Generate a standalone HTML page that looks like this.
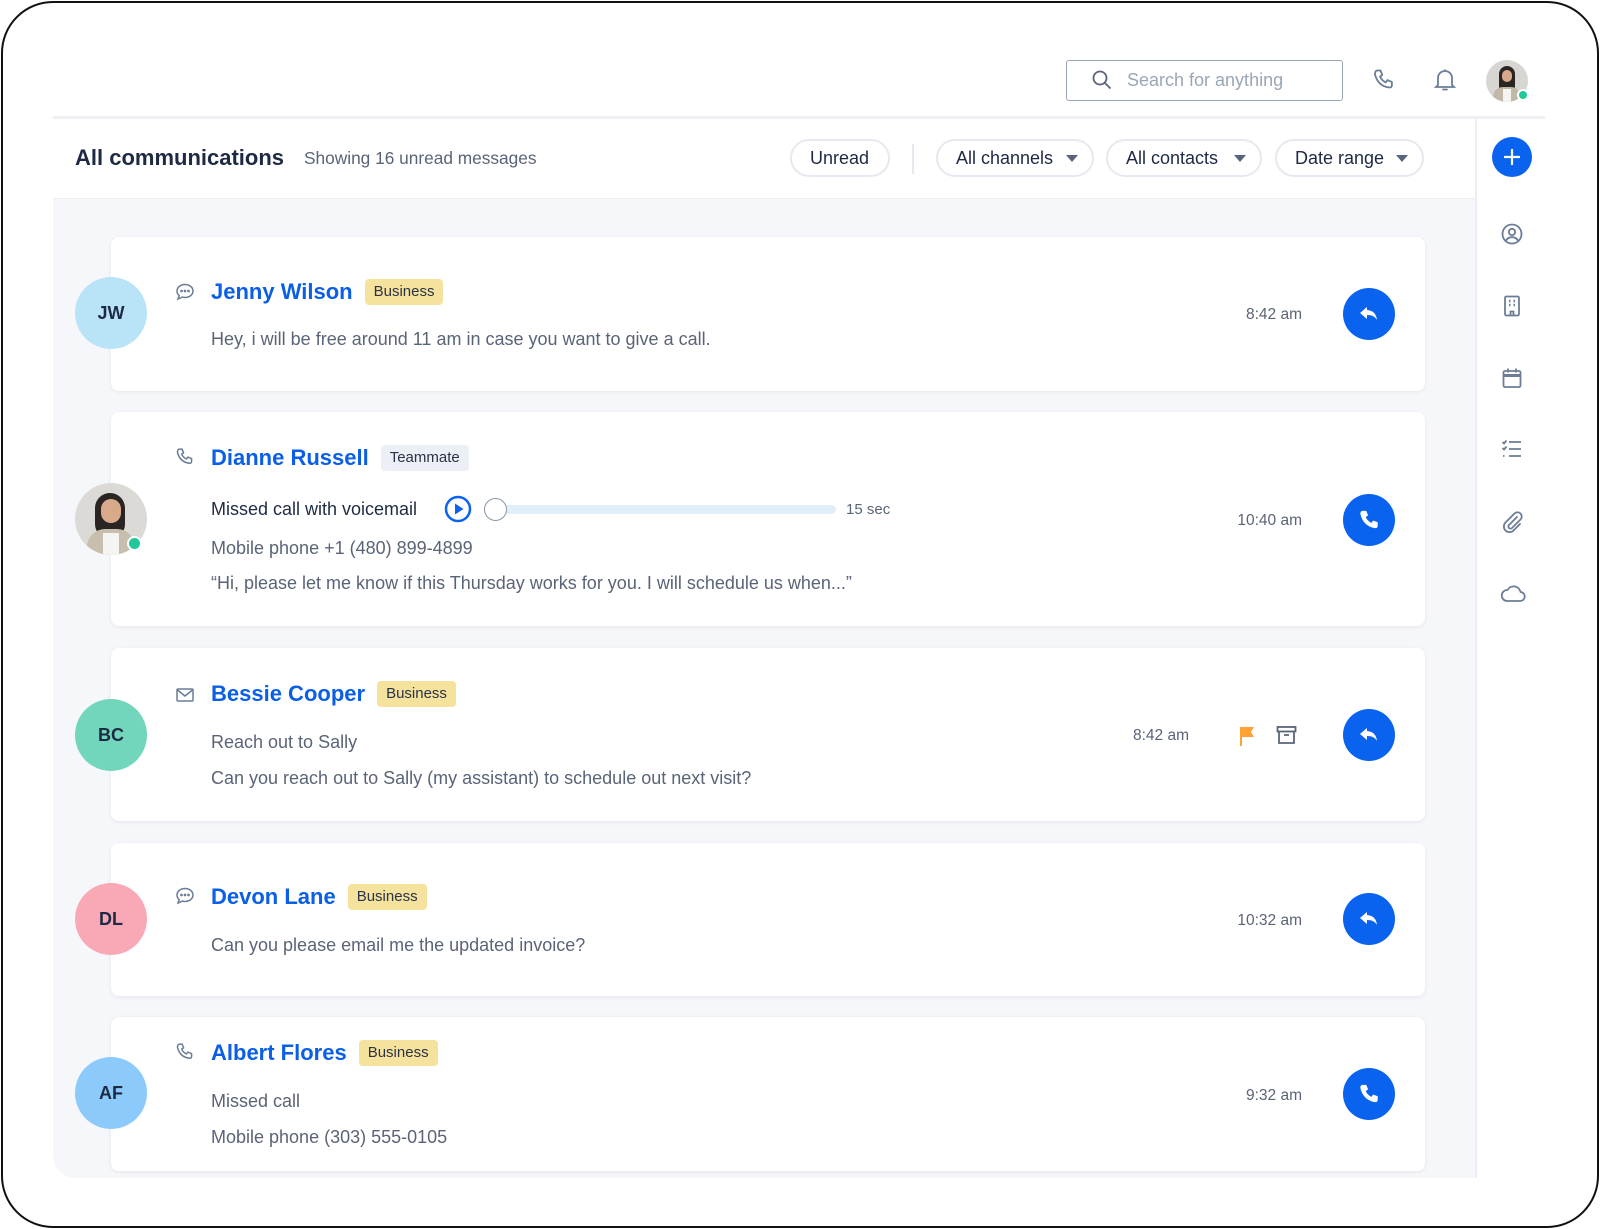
<!DOCTYPE html>
<html><head><meta charset="utf-8">
<style>
*{margin:0;padding:0;box-sizing:border-box}
body{width:1600px;height:1229px;background:#fff;font-family:"Liberation Sans",sans-serif;position:relative;overflow:hidden;color:#5a6478}
.a{position:absolute}
.frame{left:1px;top:1px;width:1598px;height:1227px;border:2px solid #111;border-radius:52px}
.card{position:absolute;left:111px;width:1314px;background:#fff;border-radius:8px;box-shadow:0 1px 4px rgba(20,40,80,.08)}
.av{position:absolute;left:75px;width:72px;height:72px;border-radius:50%;text-align:center;line-height:72px;font-weight:bold;font-size:18px;color:#1e2a44}
.nm{position:absolute;left:211px;font-size:22px;font-weight:bold;color:#0b5ee6;line-height:28px;white-space:nowrap}
.bd{display:inline-block;vertical-align:3px;margin-left:12px;font-size:15px;font-weight:normal;color:#2a3347;background:#f5e29c;border-radius:4px;padding:0 9px;line-height:26px}
.bd.t{background:#eceff5}
.tx{position:absolute;left:211px;font-size:18px;line-height:22px;white-space:nowrap}
.tm{position:absolute;font-size:15.5px;line-height:20px;text-align:right;width:100px;color:#5a6478}
.btn{position:absolute;left:1343px;width:52px;height:52px;border-radius:50%;background:#0a63ef;display:flex;align-items:center;justify-content:center}
.ci{position:absolute;left:175px}
.pill{position:absolute;top:139px;height:38px;border:2px solid #e6e9ef;border-radius:19px;font-size:18px;color:#1e2a44;line-height:34px;padding-left:18px}
.car{position:absolute;right:14px;top:14px;width:0;height:0;border-left:6px solid transparent;border-right:6px solid transparent;border-top:7px solid #5a6478}
.si{position:absolute;left:1500px}
</style></head><body>
<div class="a frame"></div>

<div class="a" style="left:1066px;top:60px;width:277px;height:41px;border:1.5px solid #9aa6b8;border-radius:3px"></div>
<svg class="a" style="left:1092px;top:70px" width="20" height="20" viewBox="0 0 20 20" fill="none" stroke="#5a6478" stroke-width="1.8"><circle cx="8" cy="8" r="6.5"/><path d="M13 13l5.5 5.5"/></svg>
<div class="a" style="left:1127px;top:69px;font-size:18px;color:#9aa6b8;line-height:22px">Search for anything</div>
<svg class="a" style="left:1372px;top:68px" width="24" height="24" viewBox="0 0 24 24" fill="none" stroke="#6b7d96" stroke-width="1.8" stroke-linejoin="round"><path d="M5 2.5l3.5 0 1.8 4.5-2.3 1.6c1.2 2.6 3.2 4.6 5.8 5.8l1.6-2.3 4.5 1.8v3.5c0 1.2-1 2.2-2.2 2.1C9.900 18.900 5.1 14.100 3 6.6 2.800 4.500 3.800 2.500 5 2.500z"/></svg>
<svg class="a" style="left:1434px;top:68px" width="22" height="24" viewBox="0 0 22 24" fill="none" stroke="#6b7d96" stroke-width="1.8"><path d="M4 17V10a7 7 0 0114 0v7l2 2H2z"/><path d="M9 21.5h4" stroke-linecap="round"/><path d="M11 1.5v1.5"/></svg>
<div class="a" style="left:1486px;top:60px;width:42px;height:42px;border-radius:50%;background:#d8d6d2;overflow:hidden">
<div class="a" style="left:13px;top:6px;width:16px;height:28px;border-radius:8px;background:#2a2522"></div>
<div class="a" style="left:16px;top:10px;width:10px;height:12px;border-radius:5px;background:#d9a98c"></div>
<div class="a" style="left:7px;top:27px;width:28px;height:20px;border-radius:10px 10px 0 0;background:#c2b8a8"></div>
<div class="a" style="left:17px;top:29px;width:8px;height:14px;background:#f4f4f2"></div>
</div>
<div class="a" style="left:1517px;top:89px;width:12px;height:12px;border-radius:50%;background:#20c997;border:2px solid #fff"></div>

<div class="a" style="left:53px;top:116px;width:1492px;height:3px;background:#eef0f4"></div>

<div class="a" style="left:75px;top:144px;font-size:22px;font-weight:bold;color:#1e2a44;line-height:28px">All communications</div>
<div class="a" style="left:304px;top:147px;font-size:17.3px;color:#5a6478;line-height:22px">Showing 16 unread messages</div>
<div class="pill" style="left:790px;width:100px">Unread</div>
<div class="a" style="left:912px;top:144px;width:2px;height:30px;background:#e6e9ef"></div>
<div class="pill" style="left:936px;width:158px">All channels<div class="car"></div></div>
<div class="pill" style="left:1106px;width:156px">All contacts<div class="car"></div></div>
<div class="pill" style="left:1275px;width:149px">Date range<div class="car"></div></div>
<div class="a" style="left:53px;top:198px;width:1423px;height:1px;background:#eceef2"></div>

<div class="a" style="left:53px;top:199px;width:1423px;height:979px;background:#f6f7fa;border-radius:0 0 0 22px"></div>
<div class="a" style="left:1475px;top:119px;width:2px;height:1059px;background:#eceef2"></div>

<div class="a" style="left:1492px;top:137px;width:40px;height:40px;border-radius:50%;background:#0a63ef"></div>
<svg class="a" style="left:1502px;top:147px" width="20" height="20" viewBox="0 0 20 20" stroke="#fff" stroke-width="2.2"><path d="M10 2v16M2 10h16"/></svg>
<svg class="si" style="top:222px" width="24" height="24" viewBox="0 0 24 24" fill="none" stroke="#6b7d96" stroke-width="1.8"><circle cx="12" cy="12" r="9.5"/><circle cx="12" cy="10" r="3.2"/><path d="M6 18.5c1.5-2.5 3.5-3.3 6-3.3s4.5.8 6 3.3"/></svg>
<svg class="si" style="top:294px" width="24" height="24" viewBox="0 0 24 24" fill="none" stroke="#6b7d96" stroke-width="1.8"><rect x="5" y="2.5" width="14" height="19" rx="1.5"/><path d="M9 7h1.5M13.5 7h1.5M9 11h1.5M13.5 11h1.5" stroke-width="2.4"/><path d="M10.5 21.5v-4h3v4"/></svg>
<svg class="si" style="top:366px" width="24" height="24" viewBox="0 0 24 24" fill="none" stroke="#6b7d96" stroke-width="1.8"><rect x="3.5" y="5" width="17" height="16" rx="1.5"/><path d="M3.5 9.5h17" stroke-width="3"/><path d="M8 2.5v4M16 2.5v4"/></svg>
<svg class="si" style="top:437px" width="24" height="24" viewBox="0 0 24 24" fill="none" stroke="#6b7d96" stroke-width="1.8"><path d="M2.5 5l1.5 1.5 2.5-3M2.5 11l1.5 1.5 2.5-3"/><path d="M9 5h12M9 12h12M9 19h12M3 19h1.5"/></svg>
<svg class="si" style="top:510px" width="24" height="24" viewBox="0 0 24 24" fill="none" stroke="#6b7d96" stroke-width="1.8" stroke-linecap="round"><path d="M17 7l-8 8a2 2 0 003 3l8.500-8.500a4 4 0 00-6-6L5.500 12.500a5.500 5.500 0 008 8L20 14"/></svg>
<svg class="si" style="top:581px" width="26" height="24" viewBox="0 0 26 24" fill="none" stroke="#6b7d96" stroke-width="1.8" stroke-linejoin="round"><path d="M7 20h13a4.500 4.500 0 00.5-9A7 7 0 007.500 9 5.500 5.500 0 007 20z"/></svg>

<!-- card 1 -->
<div class="card" style="top:237px;height:154px"></div>
<div class="av" style="top:277px;background:#b9e3f7">JW</div>
<svg class="ci" style="top:282px" width="20" height="20" viewBox="0 0 20 20" fill="none" stroke="#6b7d96" stroke-width="1.5"><path d="M10 2.5c4.400 0 8 2.800 8 6.500S14.400 15.500 10 15.500c-.9 0-1.800-.1-2.600-.4L3 17l1.200-3.400C2.800 12.500 2 11 2 9c0-3.700 3.600-6.500 8-6.500z"/><circle cx="6.500" cy="9" r=".6" fill="#6b7d96"/><circle cx="10" cy="9" r=".6" fill="#6b7d96"/><circle cx="13.500" cy="9" r=".6" fill="#6b7d96"/></svg>
<div class="nm" style="top:278px">Jenny Wilson<span class="bd">Business</span></div>
<div class="tx" style="top:328px">Hey, i will be free around 11 am in case you want to give a call.</div>
<div class="tm" style="left:1202px;top:305px">8:42 am</div>
<div class="btn" style="top:288px"><svg width="24" height="24" viewBox="0 0 24 24" fill="#fff"><path d="M10 5L3 11l7 6v-4c5 0 8 1.5 10 5-.5-5.500-3.500-9.500-10-10z"/></svg></div>

<!-- card 2 -->
<div class="card" style="top:412px;height:214px"></div>
<div class="av" style="top:483px;background:#dcdad6;overflow:hidden">
<div class="a" style="left:20px;top:10px;width:30px;height:46px;border-radius:15px;background:#2a2522"></div>
<div class="a" style="left:26px;top:16px;width:20px;height:24px;border-radius:10px;background:#d9a98c"></div>
<div class="a" style="left:12px;top:46px;width:48px;height:34px;border-radius:18px 18px 0 0;background:#c7beae"></div>
<div class="a" style="left:28px;top:50px;width:16px;height:30px;background:#f4f4f2"></div>
</div>
<div class="a" style="left:127px;top:536px;width:15px;height:15px;border-radius:50%;background:#20c997;border:2px solid #fff"></div>
<svg class="ci" style="top:447px" width="20" height="20" viewBox="0 0 24 24" fill="none" stroke="#6b7d96" stroke-width="1.8" stroke-linejoin="round"><path d="M5 2.500l3.500 0 1.800 4.500-2.300 1.600c1.200 2.600 3.200 4.600 5.800 5.800l1.600-2.300 4.500 1.800v3.500c0 1.200-1 2.200-2.200 2.100C9.900 18.900 5.100 14.100 3 6.600 2.800 4.500 3.800 2.500 5 2.500z"/></svg>
<div class="nm" style="top:444px">Dianne Russell<span class="bd t">Teammate</span></div>
<div class="tx" style="top:498px;color:#1e2a44">Missed call with voicemail</div>
<svg class="a" style="left:444px;top:495px" width="28" height="28" viewBox="0 0 28 28"><circle cx="14" cy="14" r="12" fill="none" stroke="#0a63ef" stroke-width="2.5"/><path d="M11 8.500v11l8.500-5.500z" fill="#0a63ef"/></svg>
<div class="a" style="left:496px;top:505px;width:340px;height:9px;border-radius:5px;background:#e1effb"></div>
<div class="a" style="left:484px;top:498px;width:23px;height:23px;border-radius:50%;background:#fff;border:1.5px solid #8a96a8"></div>
<div class="a" style="left:846px;top:500px;font-size:15px;line-height:20px">15 sec</div>
<div class="tx" style="top:537px">Mobile phone +1 (480) 899-4899</div>
<div class="tx" style="top:572px">“Hi, please let me know if this Thursday works for you. I will schedule us when...”</div>
<div class="tm" style="left:1202px;top:511px">10:40 am</div>
<div class="btn" style="top:494px"><svg width="22" height="22" viewBox="0 0 24 24" fill="#fff"><path d="M5 2l4 0 2 5-2.600 1.800c1.300 2.800 3.500 5 6.300 6.300L16.500 12.500l5 2v4c0 1.400-1.100 2.600-2.500 2.400C10.500 20 4 13.500 2.600 5 2.400 3.500 3.500 2 5 2z"/></svg></div>

<!-- card 3 -->
<div class="card" style="top:648px;height:173px"></div>
<div class="av" style="top:699px;background:#72d6bc">BC</div>
<svg class="ci" style="top:685px" width="20" height="20" viewBox="0 0 20 20" fill="none" stroke="#6b7d96" stroke-width="1.5"><rect x="2" y="4" width="16" height="12" rx="1"/><path d="M2.500 5l7.500 6 7.500-6"/></svg>
<div class="nm" style="top:680px">Bessie Cooper<span class="bd">Business</span></div>
<div class="tx" style="top:731px">Reach out to Sally</div>
<div class="tx" style="top:767px">Can you reach out to Sally (my assistant) to schedule out next visit?</div>
<div class="tm" style="left:1089px;top:726px">8:42 am</div>
<svg class="a" style="left:1237px;top:725px" width="20" height="22" viewBox="0 0 20 22"><path d="M3 2h14l-3 5 3 5H5v9H3z" fill="#ffa233"/></svg>
<svg class="a" style="left:1276px;top:725px" width="21" height="20" viewBox="0 0 21 20" fill="none" stroke="#5a6478" stroke-width="1.8"><rect x="1.500" y="2" width="18" height="4.500"/><path d="M3 6.500V18h15V6.500M8 10h5"/></svg>
<div class="btn" style="top:709px"><svg width="24" height="24" viewBox="0 0 24 24" fill="#fff"><path d="M10 5L3 11l7 6v-4c5 0 8 1.500 10 5-.5-5.500-3.500-9.500-10-10z"/></svg></div>

<!-- card 4 -->
<div class="card" style="top:843px;height:153px"></div>
<div class="av" style="top:883px;background:#f9a9b5">DL</div>
<svg class="ci" style="top:886px" width="20" height="20" viewBox="0 0 20 20" fill="none" stroke="#6b7d96" stroke-width="1.5"><path d="M10 2.500c4.400 0 8 2.800 8 6.500S14.400 15.500 10 15.500c-.9 0-1.800-.1-2.600-.4L3 17l1.200-3.400C2.800 12.500 2 11 2 9c0-3.700 3.600-6.500 8-6.500z"/><circle cx="6.500" cy="9" r=".6" fill="#6b7d96"/><circle cx="10" cy="9" r=".6" fill="#6b7d96"/><circle cx="13.500" cy="9" r=".6" fill="#6b7d96"/></svg>
<div class="nm" style="top:883px">Devon Lane<span class="bd">Business</span></div>
<div class="tx" style="top:934px">Can you please email me the updated invoice?</div>
<div class="tm" style="left:1202px;top:911px">10:32 am</div>
<div class="btn" style="top:893px"><svg width="24" height="24" viewBox="0 0 24 24" fill="#fff"><path d="M10 5L3 11l7 6v-4c5 0 8 1.500 10 5-.5-5.500-3.500-9.500-10-10z"/></svg></div>

<!-- card 5 -->
<div class="card" style="top:1017px;height:154px"></div>
<div class="av" style="top:1057px;background:#8ccafc">AF</div>
<svg class="ci" style="top:1042px" width="20" height="20" viewBox="0 0 24 24" fill="none" stroke="#6b7d96" stroke-width="1.8" stroke-linejoin="round"><path d="M5 2.500l3.500 0 1.800 4.500-2.300 1.600c1.200 2.600 3.200 4.600 5.800 5.800l1.600-2.300 4.500 1.800v3.500c0 1.200-1 2.200-2.200 2.100C9.900 18.900 5.100 14.100 3 6.600 2.800 4.500 3.800 2.500 5 2.500z"/></svg>
<div class="nm" style="top:1039px">Albert Flores<span class="bd">Business</span></div>
<div class="tx" style="top:1090px">Missed call</div>
<div class="tx" style="top:1126px">Mobile phone (303) 555-0105</div>
<div class="tm" style="left:1202px;top:1086px">9:32 am</div>
<div class="btn" style="top:1068px"><svg width="22" height="22" viewBox="0 0 24 24" fill="#fff"><path d="M5 2l4 0 2 5-2.600 1.800c1.300 2.800 3.500 5 6.300 6.300L16.500 12.500l5 2v4c0 1.400-1.100 2.600-2.500 2.400C10.500 20 4 13.500 2.600 5 2.400 3.500 3.500 2 5 2z"/></svg></div>
</body></html>
